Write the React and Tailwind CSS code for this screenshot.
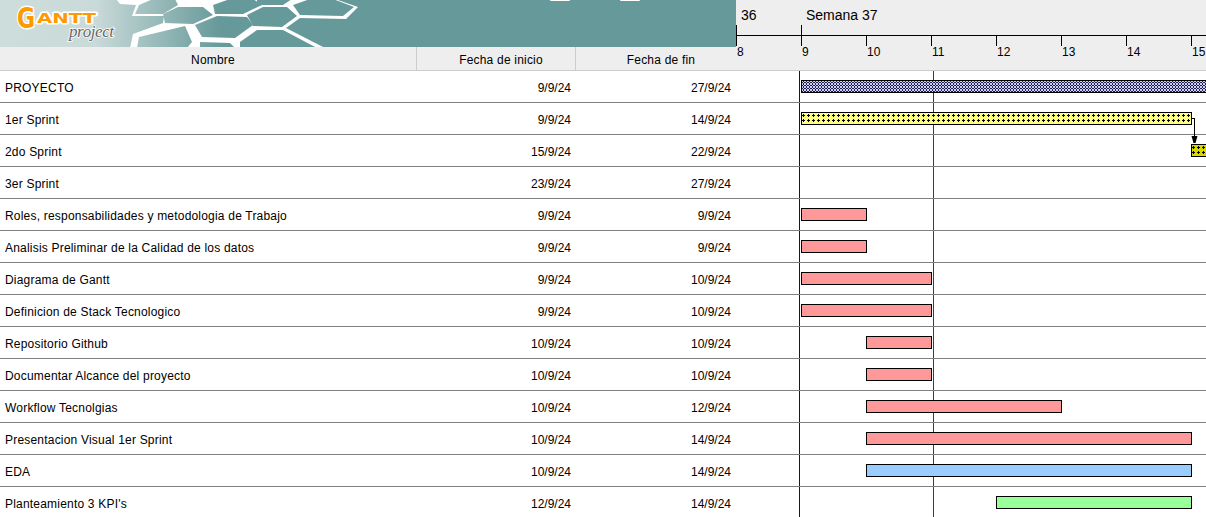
import React from 'react';

const font = { fontFamily: '"Liberation Sans", Arial, sans-serif' };

const tasks = [
    { name: 'PROYECTO', start: '9/9/24', end: '27/9/24', bar: 'ml-[65px] w-[406px]', kind: 'summary' },
    { name: '1er Sprint', start: '9/9/24', end: '14/9/24', bar: 'ml-[65px] w-[391px]', kind: 'sprint' },
    { name: '2do Sprint', start: '15/9/24', end: '22/9/24', bar: 'ml-[455px] w-[16px]', kind: 'sprint2' },
    { name: '3er Sprint', start: '23/9/24', end: '27/9/24' },
    { name: 'Roles, responsabilidades y metodologia de Trabajo', start: '9/9/24', end: '9/9/24', bar: 'ml-[65px] w-[66px]', kind: 'pink' },
    { name: 'Analisis Preliminar de la Calidad de los datos', start: '9/9/24', end: '9/9/24', bar: 'ml-[65px] w-[66px]', kind: 'pink' },
    { name: 'Diagrama de Gantt', start: '9/9/24', end: '10/9/24', bar: 'ml-[65px] w-[131px]', kind: 'pink' },
    { name: 'Definicion de Stack Tecnologico', start: '9/9/24', end: '10/9/24', bar: 'ml-[65px] w-[131px]', kind: 'pink' },
    { name: 'Repositorio Github', start: '10/9/24', end: '10/9/24', bar: 'ml-[130px] w-[66px]', kind: 'pink' },
    { name: 'Documentar Alcance del proyecto', start: '10/9/24', end: '10/9/24', bar: 'ml-[130px] w-[66px]', kind: 'pink' },
    { name: 'Workflow Tecnolgias', start: '10/9/24', end: '12/9/24', bar: 'ml-[130px] w-[196px]', kind: 'pink' },
    { name: 'Presentacion Visual 1er Sprint', start: '10/9/24', end: '14/9/24', bar: 'ml-[130px] w-[326px]', kind: 'pink' },
    { name: 'EDA', start: '10/9/24', end: '14/9/24', bar: 'ml-[130px] w-[326px]', kind: 'blue' },
    { name: "Planteamiento 3 KPI's", start: '12/9/24', end: '14/9/24', bar: 'ml-[260px] w-[196px]', kind: 'green' },
];

const kindClass = {
    summary: 'bg-[#ccccff]',
    sprint: 'bg-[#ffff80]',
    sprint2: 'bg-[#d8d800]',
    pink: 'bg-[#ff9999]',
    blue: 'bg-[#99ccff]',
    green: 'bg-[#99ff99]',
};

const days = ['8', '9', '10', '11', '12', '13', '14', '15'];

const cells = [
    '139,5 153,-1 175,-1 178,5 163,14 135,14',
    '163,14 178,7 203,7 213,15 193,24 165,23',
    '139,37 185,26 192,42 187,48 137,48',
    '195,25 217,16 247,17 253,25 235,38 202,37',
    '213,5 230,-1 253,-1 262,5 243,14 215,14',
    '247,15 263,7 287,7 297,16 282,27 253,26',
    '240,42 257,30 283,30 317,48 240,48',
    '293,5 310,-1 333,-1 354,7 343,16 300,15',
    '257,5 283,5 292,-1 257,-1',
    '200,42 230,43 235,48 200,48',
];

const Banner = () => (
    <div className="h-[47px] overflow-hidden bg-[#669999]">
        <svg width="736" height="47" viewBox="0 0 736 47" className="block">
            <defs>
                <linearGradient id="fade" gradientUnits="userSpaceOnUse" x1="0" x2="736" y1="0" y2="0">
                    <stop offset="0" stopColor="#cddddc" />
                    <stop offset="0.13" stopColor="#c9dad9" />
                    <stop offset="0.3" stopColor="#669999" />
                </linearGradient>
            </defs>
            <rect width="736" height="47" fill="url(#fade)" />
            <polygon points="116,-1 120,4 136,5 132,16 164,16 163,23 133,34 130,48 325,48 286,28 300,18 346,19 358,7 335,-1" fill="#fff" />
            {cells.map((p) => (
                <polygon key={p} points={p} fill="url(#fade)" />
            ))}
            <rect x="550" y="-1" width="20" height="2" rx="1" fill="#fff" />
            <rect x="620" y="-1" width="20" height="2" rx="1" fill="#fff" />
            <g stroke="#fff" strokeWidth="3" strokeLinejoin="round" fill="#ff9900" fontWeight="700" fontFamily="'DejaVu Sans', sans-serif">
                <text x="17" y="28" fontSize="28" textLength="18" lengthAdjust="spacingAndGlyphs" style={{ paintOrder: 'stroke' }}>G</text>
                <text x="37" y="23" fontSize="14" textLength="59" lengthAdjust="spacingAndGlyphs" style={{ paintOrder: 'stroke' }}>ANTT</text>
            </g>
            <text x="69" y="37" fontSize="17" fontStyle="italic" fill="#666" stroke="#fff" strokeWidth="1.5" fontFamily="'Liberation Serif', serif" textLength="45" style={{ paintOrder: 'stroke' }}>project</text>
        </svg>
    </div>
);

const Timeline = () => (
    <div className="w-[470px] h-[71px] bg-[#eeeeee] border-b border-[#cccccc] text-black">
        <div className="flex h-[25px] items-center text-[14px] pt-[5px]">
            <div className="w-[65px] pl-[5px]">36</div>
            <div className="pl-[5px]">Semana 37</div>
        </div>
        <svg width="470" height="21" viewBox="0 0 470 21" className="block">
            <g stroke="#000" shapeRendering="crispEdges">
                <line x1="0" y1="10.5" x2="470" y2="10.5" />
                <line x1="0.5" y1="0" x2="0.5" y2="21" />
                <line x1="65.5" y1="0" x2="65.5" y2="21" />
                <line x1="130.5" y1="10" x2="130.5" y2="21" />
                <line x1="195.5" y1="10" x2="195.5" y2="21" />
                <line x1="260.5" y1="10" x2="260.5" y2="21" />
                <line x1="325.5" y1="10" x2="325.5" y2="21" />
                <line x1="390.5" y1="10" x2="390.5" y2="21" />
                <line x1="455.5" y1="10" x2="455.5" y2="21" />
            </g>
        </svg>
        <div className="flex text-[12px] leading-[12px]">
            {days.map((d) => (
                <div key={d} className="w-[65px] shrink-0 pl-[1px]">{d}</div>
            ))}
        </div>
    </div>
);

const Hatch = ({ kind }) => {
    if (kind === 'summary') {
        return (
            <svg width="100%" height="100%" className="block">
                <defs>
                    <pattern id="weave" width="3" height="3" patternUnits="userSpaceOnUse">
                        <path d="M1 0h1v1h-1zM0 1h1v1h-1zM2 1h1v1h-1zM1 2h1v1h-1z" fill="#222244" shapeRendering="crispEdges" />
                    </pattern>
                </defs>
                <rect width="100%" height="100%" fill="url(#weave)" />
            </svg>
        );
    }
    if (kind === 'sprint' || kind === 'sprint2') {
        return (
            <svg width="100%" height="100%" className="block">
                <defs>
                    <pattern id={`plus-${kind}`} x="0" y="1" width="5" height="5" patternUnits="userSpaceOnUse">
                        <path d="M1 0h1v1h1v1h-1v1h-1v-1h-1v-1h1z" fill="#000" shapeRendering="crispEdges" />
                    </pattern>
                </defs>
                <rect width="100%" height="100%" fill={`url(#plus-${kind})`} />
            </svg>
        );
    }
    return null;
};

export default function App() {
    return (
        <div className="relative w-[1206px] h-[517px] overflow-hidden bg-white text-[12px] text-black" style={font}>
            {/* Cabecera */}
            <div className="flex">
                <div className="w-[736px] shrink-0">
                    <Banner />
                    <div className="flex h-[24px] bg-[#eeeeee] border-b border-[#cccccc] text-center leading-[26px] tracking-[0.2px]">
                        <div className="w-[417px] pl-[10px] border-r border-[#cccccc]">Nombre</div>
                        <div className="w-[159px] pl-[10px] border-r border-[#cccccc]">Fecha de inicio</div>
                        <div className="w-[160px] pl-[10px]">Fecha de fin</div>
                    </div>
                </div>
                <Timeline />
            </div>

            {/* Lineas de fin de semana y hoy */}
            <div className="absolute left-[799px] top-[71px] bottom-0 w-px bg-[#0000cc]"></div>
            <div className="absolute left-[933px] top-[71px] bottom-0 w-px bg-[#cc0000]"></div>

            {/* Filas */}
            <div className="relative">
                {tasks.map((t) => (
                    <div key={t.name} className="flex h-[32px] border-b border-[#808080]">
                        <div className="w-[417px] pl-[5px] pt-[1px] leading-[32px] whitespace-nowrap tracking-[0.2px]">{t.name}</div>
                        <div className="w-[159px] pr-[5px] pt-[1px] text-right leading-[32px]">{t.start}</div>
                        <div className="w-[160px] pr-[5px] pt-[1px] text-right leading-[32px]">{t.end}</div>
                        <div className="w-[470px] pt-[9px]">
                            {t.bar && (
                                <div className={`${t.bar} h-[13px] border border-black overflow-hidden ${kindClass[t.kind]}`}>
                                    <Hatch kind={t.kind} />
                                </div>
                            )}
                        </div>
                    </div>
                ))}
            </div>

            {/* Dependencia 1er Sprint -> 2do Sprint */}
            <svg className="absolute left-[1186px] top-[110px]" width="14" height="36" viewBox="0 0 14 36">
                <path d="M6 8.5 H8.5 V32" fill="none" stroke="#000" shapeRendering="crispEdges" />
                <path d="M5.5 26 H11.5 L9.5 33 H7.5 Z" fill="#000" />
            </svg>
        </div>
    );
}
